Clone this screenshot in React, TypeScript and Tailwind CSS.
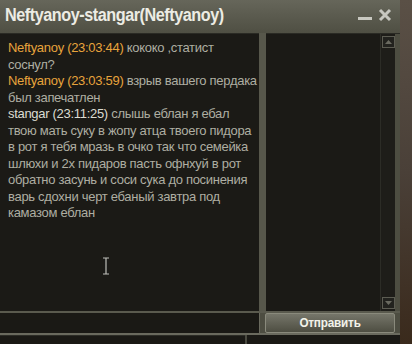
import React from "react";

type Msg = { name: string; time: string; text: string; self: boolean };

const messages: Msg[] = [
	{ name: "Neftyanoy", time: "23:03:44", text: "кококо ,статист соснул?", self: true },
	{ name: "Neftyanoy", time: "23:03:59", text: "взрыв вашего пердака был запечатлен", self: true },
	{
		name: "stangar",
		time: "23:11:25",
		text: "слышь еблан я ебал твою мать суку в жопу атца твоего пидора в рот я тебя мразь в очко так что семейка шлюхи и 2х пидаров пасть офнхуй в рот обратно засунь и соси сука до посинения варь сдохни черт ебаный завтра под камазом еблан",
		self: false,
	},
];

const ScrollArrow = ({ up }: { up?: boolean }) => (
	<div className="w-[13px] h-[12px] border border-[#5c5c52] bg-[#22221e] flex items-center justify-center">
		<svg width="7" height="4" viewBox="0 0 7 4">
			<path d={up ? "M0 4 L3.5 0 L7 4 Z" : "M0 0 L3.5 4 L7 0 Z"} fill="#6a6a60" />
		</svg>
	</div>
);

export default function App() {
	return (
		<div className="relative w-[412px] h-[344px] flex bg-[#1a1915] overflow-hidden font-['Liberation_Sans',sans-serif]">
			<div className="w-[400px] h-full flex flex-col bg-[#4d4d41]">
				{/* title bar */}
				<div className="h-[33px] shrink-0 flex items-center justify-between pl-[5px] pr-[8px] bg-gradient-to-b from-[#66665a] to-[#4f4f43]">
					<div className="text-[18px] font-bold text-[#ecece4] tracking-[-0.5px] scale-x-[0.9] origin-left whitespace-nowrap pb-[2px]">
						Neftyanoy-stangar(Neftyanoy)
					</div>
					<div className="flex items-center gap-[6px] pb-[3px]">
						<div className="w-[14px] h-[3px] bg-[#c8c8c0] mt-[7px]" />
						<svg width="14" height="14" viewBox="0 0 14 14">
							<path d="M2 2 L12 12 M12 2 L2 12" stroke="#c8c8c0" strokeWidth="3" />
						</svg>
					</div>
				</div>

				{/* panels */}
				<div className="h-[278px] shrink-0 flex">
					<div className="w-[259px] bg-[#1b1a16] border-t border-[#2a2a24] pl-[8px] pr-[2px] pt-[6px] text-[13px] leading-[16.5px] tracking-[-0.3px]">
						{messages.map((m, i) => (
							<div key={i}>
								<span className={m.self ? "text-[#e8a43c]" : "text-[#dcdcd2]"}>
									{m.name} ({m.time})
								</span>{" "}
								<span className="text-[#aeaea2]">{m.text}</span>
							</div>
						))}
					</div>
					<div className="w-[7px] bg-[#57574b]" />
					<div className="flex-1 flex bg-[#1b1a16] border-t border-[#2a2a24]">
						<div className="flex-1" />
						<div className="w-[15px] flex flex-col justify-between items-center py-[2px] border-l border-[#2c2c26] bg-[#1e1d19]">
							<ScrollArrow up />
							<ScrollArrow />
						</div>
						<div className="w-[5px] bg-[#4d4d41]" />
					</div>
				</div>

				{/* input row */}
				<div className="h-[2px] bg-[#5a5a4e]" />
				<div className="h-[20px] shrink-0 flex">
					<div className="w-[260px] bg-[#1a1915] border-r border-[#6a6a5e]" />
					<div className="w-[5px] bg-[#4d4d41]" />
					<div className="w-[130px] rounded-[2px] bg-gradient-to-b from-[#76766a] to-[#4e4e42] flex items-center justify-center border border-[#8a8a7c]">
						<span className="text-[13px] font-bold text-[#f2f2ea] scale-x-[0.9] tracking-[-0.2px]">Отправить</span>
					</div>
					<div className="w-[5px] bg-[#4d4d41]" />
				</div>
				<div className="h-[2px] bg-[#6a6a5e]" />
				<div className="flex-1 bg-[#1a1915] flex">
					<div className="w-[245px] border-t border-[#2c2c26]" />
					<div className="w-[2px] bg-[#4a4a40]" />
				</div>
			</div>
			<div className="w-[12px] h-full bg-gradient-to-b from-[#5a5046] via-[#4a4038] to-[#3a2a1c]" />

			{/* mouse text cursor */}
			<svg className="absolute left-[102px] top-[257px]" width="8" height="18" viewBox="0 0 8 18">
				<path d="M1 1 H7 M4 1 V17 M1 17 H7" stroke="#1a1a1a" strokeWidth="3" />
				<path d="M1 1 H7 M4 1 V17 M1 17 H7" stroke="#bdbdb5" strokeWidth="1.2" />
			</svg>
		</div>
	);
}
